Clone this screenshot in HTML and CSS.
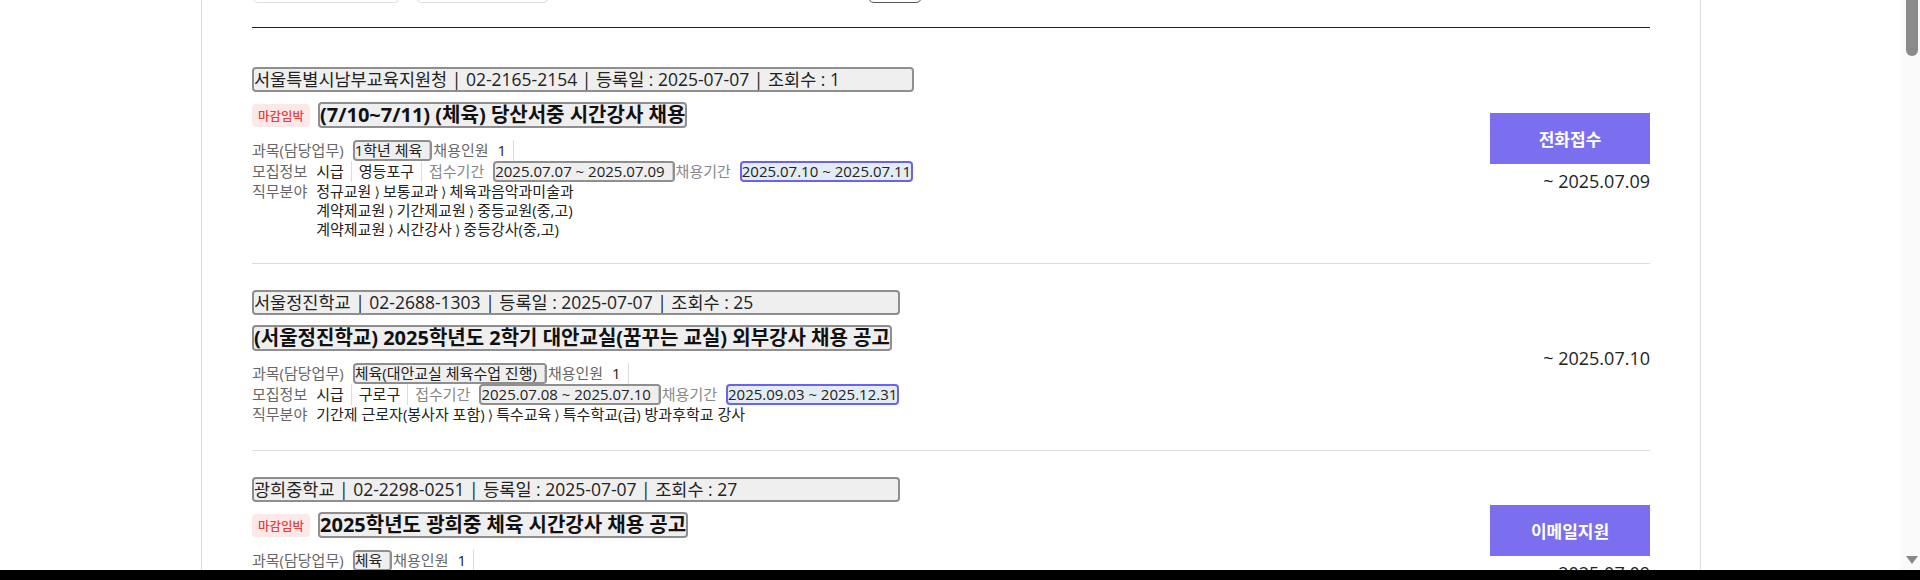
FILE: index.html
```html
<!DOCTYPE html>
<html lang="ko">
<head>
<meta charset="utf-8">
<title>채용 공고</title>
<link rel="stylesheet" href="styles.css">
</head>
<body>
<div class="viewport">
  <main class="main">
    <div class="container">
      <div class="filters">
        <div class="fbox fbox-a"></div>
        <div class="fbox fbox-b"></div>
        <div class="fbtn"></div>
      </div>
      <ul class="list">
        <li class="item">
          <div class="info">
            <div class="tag meta">서울특별시남부교육지원청 | 02-2165-2154 | 등록일 : 2025-07-07 | 조회수 : 1</div>
            <div class="title-row"><span class="badge">마감임박</span><span class="tag title">(7/10~7/11) (체육) 당산서중 시간강사 채용</span></div>
            <div class="row">
              <span class="lbl">과목(담당업무)</span>
              <span class="tag box"><span class="bval">1학년 체육</span></span>
              <span class="lbl">채용인원</span>
              <span class="val">1</span>
            </div>
            <div class="row">
              <span class="lbl">모집정보</span>
              <span class="val">시급</span>
              <span class="val">영등포구</span>
              <span class="lbl light">접수기간</span>
              <span class="tag box"><span class="bval">2025.07.07 ~ 2025.07.09</span></span>
              <span class="lbl light">채용기간</span>
              <span class="tag box blue"><span class="bval last">2025.07.10 ~ 2025.07.11</span></span>
            </div>
            <div class="row multi">
              <span class="lbl">직무분야</span>
              <div class="lines">
                <div>정규교원<span class="arr">⟩</span>보통교과<span class="arr">⟩</span>체육과음악과미술과</div>
                <div>계약제교원<span class="arr">⟩</span>기간제교원<span class="arr">⟩</span>중등교원(중,고)</div>
                <div>계약제교원<span class="arr">⟩</span>시간강사<span class="arr">⟩</span>중등강사(중,고)</div>
              </div>
            </div>
          </div>
          <div class="side">
            <a class="apply">전화접수</a>
            <div class="due">~ 2025.07.09</div>
          </div>
        </li>
        <li class="item">
          <div class="info">
            <div class="tag meta">서울정진학교 | 02-2688-1303 | 등록일 : 2025-07-07 | 조회수 : 25</div>
            <div class="title-row"><span class="tag title">(서울정진학교) 2025학년도 2학기 대안교실(꿈꾸는 교실) 외부강사 채용 공고</span></div>
            <div class="row">
              <span class="lbl">과목(담당업무)</span>
              <span class="tag box"><span class="bval">체육(대안교실 체육수업 진행)</span></span>
              <span class="lbl">채용인원</span>
              <span class="val">1</span>
            </div>
            <div class="row">
              <span class="lbl">모집정보</span>
              <span class="val">시급</span>
              <span class="val">구로구</span>
              <span class="lbl light">접수기간</span>
              <span class="tag box"><span class="bval">2025.07.08 ~ 2025.07.10</span></span>
              <span class="lbl light">채용기간</span>
              <span class="tag box blue"><span class="bval last">2025.09.03 ~ 2025.12.31</span></span>
            </div>
            <div class="row multi">
              <span class="lbl">직무분야</span>
              <div class="lines">
                <div>기간제 근로자(봉사자 포함)<span class="arr">⟩</span>특수교육<span class="arr">⟩</span>특수학교(급) 방과후학교 강사</div>
              </div>
            </div>
          </div>
          <div class="side">
            <div class="due">~ 2025.07.10</div>
          </div>
        </li>
        <li class="item">
          <div class="info">
            <div class="tag meta">광희중학교 | 02-2298-0251 | 등록일 : 2025-07-07 | 조회수 : 27</div>
            <div class="title-row"><span class="badge">마감임박</span><span class="tag title">2025학년도 광희중 체육 시간강사 채용 공고</span></div>
            <div class="row">
              <span class="lbl">과목(담당업무)</span>
              <span class="tag box"><span class="bval">체육</span></span>
              <span class="lbl">채용인원</span>
              <span class="val">1</span>
            </div>
            <div class="row">
              <span class="lbl">모집정보</span>
              <span class="val">시급</span>
              <span class="val">성동구</span>
              <span class="lbl light">접수기간</span>
              <span class="tag box"><span class="bval">2025.07.07 ~ 2025.07.09</span></span>
              <span class="lbl light">채용기간</span>
              <span class="tag box blue"><span class="bval last">2025.07.10 ~ 2025.08.31</span></span>
            </div>
            <div class="row multi">
              <span class="lbl">직무분야</span>
              <div class="lines">
                <div>계약제교원<span class="arr">⟩</span>시간강사<span class="arr">⟩</span>중등강사(중,고)</div>
              </div>
            </div>
          </div>
          <div class="side">
            <a class="apply">이메일지원</a>
            <div class="due">~ 2025.07.09</div>
          </div>
        </li>
      </ul>
    </div>
  </main>
  <div class="scrollbar">
    <div class="thumb"></div>
    <div class="track"></div>
    <div class="arrow"></div>
  </div>
  <div class="blackbar"></div>
</div>
</body>
</html>
```

FILE: styles.css
```css
* { box-sizing: border-box; }
html, body { margin: 0; padding: 0; }
body {
  background: #fff;
  font-family: "Open Sans", "Noto Sans CJK KR", sans-serif;
  color: #222;
}
.viewport {
  width: 1920px;
  height: 580px;
  overflow: hidden;
  display: grid;
  grid-template-columns: 1901px 19px;
  grid-template-rows: 570px 10px;
}
.main {
  overflow: hidden;
  grid-column: 1;
  grid-row: 1;
}
.container {
  width: 1500px;
  margin-left: 201px;
  min-height: 600px;
  border-left: 1px solid #ddd;
  border-right: 1px solid #ddd;
  padding: 0 50px;
}
.filters {
  display: flex;
  gap: 16px;
  margin-top: -37px;
  padding-bottom: 24px;
  border-bottom: 1px solid #222;
}
.fbox {
  height: 40px;
  border: 1px solid #ddd;
  border-radius: 6px;
}
.fbox-a { width: 148px; }
.fbox-b { width: 133px; }
.fbtn {
  width: 54px;
  height: 40px;
  margin-left: 303px;
  border: 1px solid #555;
  border-radius: 6px;
}
.list {
  list-style: none;
  margin: 13px 0 0;
  padding: 0;
}
.item {
  display: flex;
  justify-content: space-between;
  align-items: center;
  padding: 26px 0 24px;
  border-bottom: 1px solid #ddd;
}
.info {
  display: flex;
  flex-direction: column;
  align-items: flex-start;
}
.tag {
  background: #efefef;
  border: 2px solid #8f8f8f;
  border-radius: 4px;
}
.meta {
  align-self: stretch;
  font-size: 17.5px;
  line-height: 21px;
  padding: 0;
  color: #222;
}
.title-row {
  display: flex;
  align-items: center;
  margin-top: 10px;
  margin-bottom: 12px;
}
.badge {
  display: inline-flex;
  align-items: center;
  height: 23px;
  padding: 0 6px;
  margin-right: 8px;
  border-radius: 4px;
  background: #fde8e8;
  color: #e5413b;
  font-size: 12.5px;
  font-weight: 500;
}
.title {
  font-size: 20px;
  font-weight: 700;
  line-height: 22px;
  color: #111;
}
.row {
  display: flex;
  align-items: stretch;
  font-size: 15px;
  line-height: 17px;
  min-height: 21px;
}
.lbl {
  display: flex;
  align-items: center;
  color: #666;
  margin-right: 9px;
}
.lbl.light { color: #888; margin-right: 9px; }
.val {
  display: flex;
  align-items: center;
  padding-right: 7px;
  margin-right: 7px;
  border-right: 1px solid #ddd;
  color: #222;
}
.box {
  display: flex;
  align-items: center;
  margin-right: 1px;
  color: #222;
}
.bval {
  padding-right: 7px;
  border-right: 1px solid #c8c8c8;
}
.bval.last { padding-right: 0; border-right: 0; }
.blue {
  background: #e4ecf3;
  border-color: #6b62f2;
}
.row.multi { align-items: flex-start; }
.row.multi .lbl { height: 18px; }
.lines { line-height: 18px; color: #222; }
.arr { margin: 0 3px; color: #333; font-family: "DejaVu Sans", sans-serif; font-size: 14px; }
.side {
  width: 160px;
  display: flex;
  flex-direction: column;
  align-items: flex-end;
}
.apply {
  display: flex;
  align-items: center;
  justify-content: center;
  width: 160px;
  height: 51px;
  background: #7b6ff0;
  color: #fff;
  font-size: 17px;
  font-weight: 700;
  margin-bottom: 4px;
}
.due {
  font-size: 18px;
  line-height: 26px;
  color: #222;
}
.scrollbar {
  grid-column: 2;
  grid-row: 1;
  background: #f9f9f9;
  display: flex;
  flex-direction: column;
  align-items: center;
}
.thumb {
  width: 12px;
  height: 56px;
  background: #8a8a8a;
  border-radius: 0 0 6px 6px;
  margin-left: 2px;
}
.track { flex: 1; }
.arrow {
  width: 0;
  height: 0;
  border-left: 6px solid transparent;
  border-right: 6px solid transparent;
  border-top: 8px solid #8a8a8a;
  margin-bottom: 6px;
  margin-left: 2px;
}
.blackbar {
  grid-column: 1 / 3;
  grid-row: 2;
  background: #000;
}
```
